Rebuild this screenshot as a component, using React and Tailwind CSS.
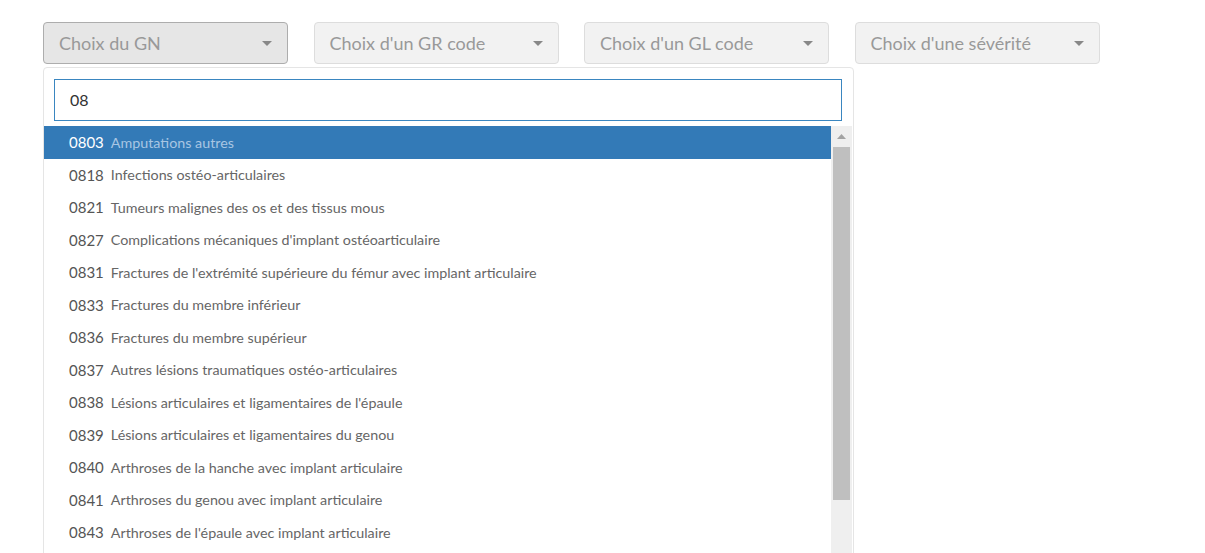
import React from "react";

const items = [
  ["0803", "Amputations autres"],
  ["0818", "Infections ostéo-articulaires"],
  ["0821", "Tumeurs malignes des os et des tissus mous"],
  ["0827", "Complications mécaniques d'implant ostéoarticulaire"],
  ["0831", "Fractures de l'extrémité supérieure du fémur avec implant articulaire"],
  ["0833", "Fractures du membre inférieur"],
  ["0836", "Fractures du membre supérieur"],
  ["0837", "Autres lésions traumatiques ostéo-articulaires"],
  ["0838", "Lésions articulaires et ligamentaires de l'épaule"],
  ["0839", "Lésions articulaires et ligamentaires du genou"],
  ["0840", "Arthroses de la hanche avec implant articulaire"],
  ["0841", "Arthroses du genou avec implant articulaire"],
  ["0843", "Arthroses de l'épaule avec implant articulaire"],
];

function Caret() {
  return (
    <svg width="10" height="5" viewBox="0 0 10 5" className="shrink-0">
      <path d="M0 0 L10 0 L5 5 Z" fill="#888" />
    </svg>
  );
}

function Select({ label, active }) {
  return (
    <div
      className={
        "w-[245px] h-[42px] rounded-[4px] border flex items-center justify-between pl-[15px] pr-[15px] text-[18px] text-[#999] " +
        (active ? "bg-[#e6e6e6] border-[#adadad]" : "bg-[#f2f2f2] border-[#ddd]")
      }
    >
      <span>{label}</span>
      <Caret />
    </div>
  );
}

export default function App() {
  return (
    <div
      className="w-[1205px] h-[553px] overflow-hidden bg-white"
      style={{ fontFamily: "Lato, 'Liberation Sans', sans-serif" }}
    >
      <div className="pt-[22px] pl-[43px] flex gap-[25.5px]">
        <Select label="Choix du GN" active />
        <Select label="Choix d'un GR code" />
        <Select label="Choix d'un GL code" />
        <Select label="Choix d'une sévérité" />
      </div>
      <div className="ml-[43px] mt-[3px] w-[811px] h-[500px] border border-[#e5e5e5] rounded-t-[4px] bg-white">
        <div className="pl-[10px] pr-[11px] pt-[11px] pb-[5px]">
          <div className="h-[42px] border border-[#3a86c0] flex items-center pl-[15px] text-[16px] text-[#333]">
            08
          </div>
        </div>
        <div className="flex">
          <div className="w-[787px]">
            {items.map(([code, label], i) => (
              <div
                key={code}
                className={
                  "h-[32.5px] flex items-center pl-[25px] " +
                  (i === 0 ? "bg-[#337ab7]" : "")
                }
              >
                <span
                  className={
                    "text-[15px] mr-[7px] " + (i === 0 ? "text-white" : "text-[#555]")
                  }
                >
                  {code}
                </span>
                <span
                  className={
                    "text-[14.3px] " + (i === 0 ? "text-[#a8c6e3]" : "text-[#666]")
                  }
                >
                  {label}
                </span>
              </div>
            ))}
          </div>
          <div className="w-[21px] bg-[#efefef] flex flex-col items-center h-[430px]">
            <div className="h-[21px] flex items-center justify-center">
              <svg width="9" height="5" viewBox="0 0 9 5">
                <path d="M0 5 L9 5 L4.5 0 Z" fill="#a3a3a3" />
              </svg>
            </div>
            <div className="w-[17px] h-[353px] bg-[#bfbfbf]" />
          </div>
        </div>
      </div>
    </div>
  );
}
